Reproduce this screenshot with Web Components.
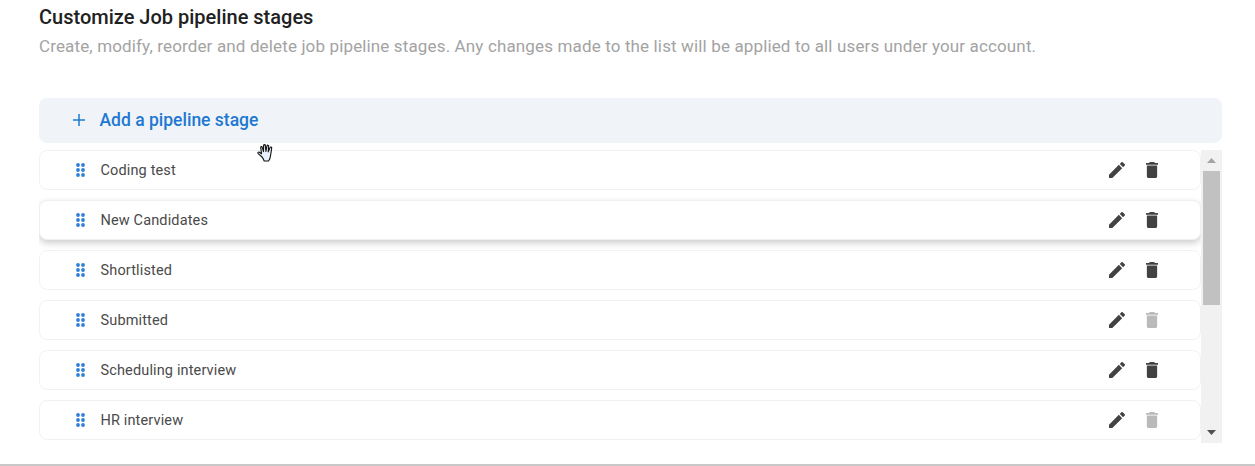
<!DOCTYPE html>
<html lang="en"><head><meta charset="utf-8"><title>Pipeline stages</title>
<style>
html,body{margin:0;padding:0;background:#fff;overflow:hidden}
body{font-family:Roboto,"Liberation Sans",sans-serif}
</style></head><body>
<pipeline-page>
  <section-head title-text="Customize Job pipeline stages">Create, modify, reorder and delete job pipeline stages. Any changes made to the list will be applied to all users under your account.</section-head>
  <add-stage>Add a pipeline stage</add-stage>
  <stage-list>
    <stage-row>Coding test</stage-row>
    <stage-row raised>New Candidates</stage-row>
    <stage-row>Shortlisted</stage-row>
    <stage-row locked>Submitted</stage-row>
    <stage-row>Scheduling interview</stage-row>
    <stage-row locked>HR interview</stage-row>
  </stage-list>
  <hand-cursor></hand-cursor>
</pipeline-page>
<script>
function def(name, html, init){
  customElements.define(name, class extends HTMLElement{
    connectedCallback(){
      if(this.shadowRoot) return;
      const r=this.attachShadow({mode:'open'});
      r.innerHTML=html;
      if(init) init(this,r);
    }
  });
}
def('pipeline-page',`<style>
:host{display:flex;flex-direction:column;box-sizing:border-box;position:relative;width:1255px;height:466px;padding:0 33px 0 39px;border-bottom:2px solid #c8c8c8;overflow:hidden;font-family:Roboto,"Liberation Sans",sans-serif}
</style><slot></slot>`);
def('section-head',`<style>
:host{display:block;height:98px;box-sizing:border-box;padding-top:6px}
h2{margin:0;font:500 20px/22px Roboto,"Liberation Sans",sans-serif;color:#212121}
p{margin:7px 0 0;font:400 17px/22px Roboto,"Liberation Sans",sans-serif;letter-spacing:.14px;color:#a3a3a3;white-space:nowrap}
</style><h2></h2><p><slot></slot></p>`,(h,r)=>{r.querySelector('h2').textContent=h.getAttribute('title-text')});
def('add-stage',`<style>
:host{display:flex;align-items:center;height:45px;flex:none;background:#f0f4f9;border-radius:8px;padding-left:33px;color:#1f78d1;font:500 17.5px/22px Roboto,"Liberation Sans",sans-serif;box-sizing:border-box}
svg{width:14px;height:14px;margin:-1px 13.5px 0 0;flex:none}
span{display:block;margin-top:-2px}
</style><svg viewBox="0 0 14 14"><path d="M7 1v12M1 7h12" stroke="#1f78d1" stroke-width="1.5" fill="none"/></svg><span><slot></slot></span>`);
def('stage-list',`<style>
:host{display:flex;height:293px;margin-top:7px;flex:none}
.rows{flex:1;min-width:0;display:flex;flex-direction:column;gap:10px;overflow:hidden;height:290px}
.bar{width:21px;flex:none;background:#f1f1f1;display:flex;flex-direction:column;align-items:center;position:relative}
.up,.down{height:21px;flex:none;display:flex;align-items:center;justify-content:center}
.thumb{width:17px;height:134px;background:#c1c1c1;flex:none}
.grow{flex:1}
svg{width:9px;height:5px;display:block}
</style><div class="rows"><slot></slot></div>
<div class="bar"><div class="up"><svg viewBox="0 0 9 5"><path d="M4.5 0L9 5H0z" fill="#a3a3a3"/></svg></div><div class="thumb"></div><div class="grow"></div><div class="down"><svg viewBox="0 0 9 5"><path d="M0 0h9L4.5 5z" fill="#505050"/></svg></div></div>`);
def('stage-row',`<style>
:host{display:flex;align-items:center;height:40px;flex:none;box-sizing:border-box;background:#fff;border:1px solid #f1f2f6;border-radius:8px;color:#4a4a4a;font:400 14.5px/20px Roboto,"Liberation Sans",sans-serif;padding-left:36px;letter-spacing:.14px}
:host([raised]){border-color:#f0f0f0;box-shadow:0 3px 7px rgba(0,0,0,.2)}
.grip{width:10px;height:14px;margin-right:15px;flex:none;display:block}
.t{flex:1;padding-top:2px;margin-left:-.5px}
.edit{width:16px;height:16px;display:block;flex:none;margin-right:21px}
.del{width:12px;height:16px;display:block;flex:none;margin-right:42px}
:host([locked]) .del{opacity:.36}
</style>
<svg class="grip" viewBox="0 0 10 14" fill="#2f7fd6"><circle cx="2" cy="2" r="1.9"/><circle cx="7" cy="2" r="1.9"/><circle cx="2" cy="7" r="1.9"/><circle cx="7" cy="7" r="1.9"/><circle cx="2" cy="12" r="1.9"/><circle cx="7" cy="12" r="1.9"/></svg>
<span class="t"><slot></slot></span>
<svg class="edit" viewBox="3 3 18 18" preserveAspectRatio="none"><path fill="#424242" d="M3 17.25V21h3.75L17.81 9.94l-3.75-3.75L3 17.25zM20.71 7.04a1 1 0 0 0 0-1.41l-2.34-2.34a1 1 0 0 0-1.41 0l-1.83 1.83 3.75 3.75 1.83-1.83z"/></svg>
<svg class="del" viewBox="5 3 14 18" preserveAspectRatio="none"><path fill="#424242" d="M6 19c0 1.1.9 2 2 2h8c1.1 0 2-.9 2-2V7H6v12zM19 4h-3.5l-1-1h-5l-1 1H5v2h14V4z"/></svg>`);
def('hand-cursor',`<style>
:host{position:absolute;left:256px;top:143px;width:21px;height:20px;display:block}
svg{width:21px;height:20px;display:block}
</style><svg viewBox="0 0 21 20"><path d="M6 14L2.2 10.6C1.4 9.7 2.3 8.6 3.4 9.2L5.6 10.8 4.7 4.6C4.6 3.4 6 3.2 6.3 4.4L7.5 8.6 7.6 2.6C7.7 1.3 9.3 1.3 9.4 2.6L9.9 8.4 11 2.9C11.2 1.8 12.8 2 12.7 3.2L12.2 8.9 14.1 4.6C14.6 3.6 16 4.1 15.7 5.2L14.7 11.6C14.4 14.2 13.9 16.6 12.6 18H8.2C7.6 16.4 7 15 6 14Z" fill="#e8f0fb" stroke="#111" stroke-width="1.1" stroke-linejoin="round"/></svg>`);
</script></body></html>
